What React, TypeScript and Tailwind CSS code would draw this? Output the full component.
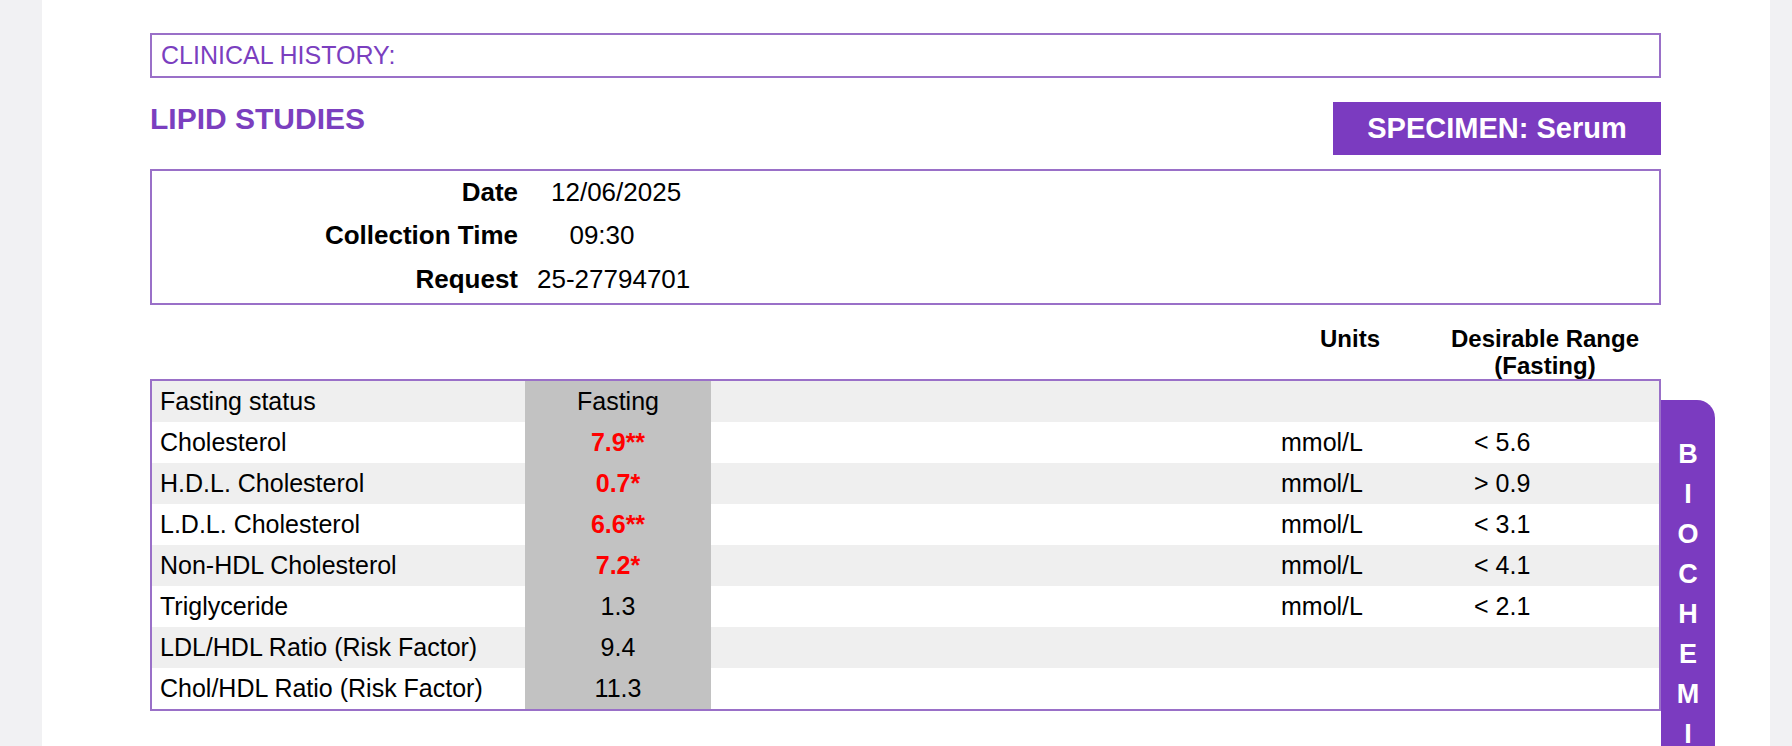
import React from 'react';

const rows = [
  { name: 'Fasting status', value: 'Fasting', flag: false, units: '', range: '' },
  { name: 'Cholesterol', value: '7.9**', flag: true, units: 'mmol/L', range: '< 5.6' },
  { name: 'H.D.L. Cholesterol', value: '0.7*', flag: true, units: 'mmol/L', range: '> 0.9' },
  { name: 'L.D.L. Cholesterol', value: '6.6**', flag: true, units: 'mmol/L', range: '< 3.1' },
  { name: 'Non-HDL Cholesterol', value: '7.2*', flag: true, units: 'mmol/L', range: '< 4.1' },
  { name: 'Triglyceride', value: '1.3', flag: false, units: 'mmol/L', range: '< 2.1' },
  { name: 'LDL/HDL Ratio (Risk Factor)', value: '9.4', flag: false, units: '', range: '' },
  { name: 'Chol/HDL Ratio (Risk Factor)', value: '11.3', flag: false, units: '', range: '' },
];

export default function App() {
  return (
    <div className="w-[1792px] h-[746px] overflow-hidden bg-[#f1f1f3] flex" style={{ fontFamily: '"Liberation Sans", Arial, sans-serif' }}>
      <div className="ml-[42px] w-[1728px] shrink-0 h-full bg-white pl-[108px] pt-[33px]">
        <div className="w-[1511px] h-[45px] border-2 border-[#9a70c8] flex items-center px-[9px] text-[25px] text-[#7b3fbf]">
          CLINICAL HISTORY:
        </div>

        <div className="w-[1511px] flex justify-between mt-[24px]">
          <div className="text-[30px] font-bold text-[#7b3fbf] mt-[-6px]">LIPID STUDIES</div>
          <div className="w-[328px] h-[53px] bg-[#7b3bc0] text-white text-[29px] font-bold flex items-center justify-center">
            SPECIMEN: Serum
          </div>
        </div>

        <div className="w-[1511px] h-[136px] border-2 border-[#9a70c8] mt-[14px] text-[26px] text-black pt-[2px]">
          <div className="flex h-[38px] items-center">
            <div className="w-[366px] shrink-0 text-right font-bold">Date</div>
            <div className="ml-[33px]">12/06/2025</div>
          </div>
          <div className="flex h-[48px] items-center">
            <div className="w-[366px] shrink-0 text-right font-bold">Collection Time</div>
            <div className="w-[168px] text-center">09:30</div>
          </div>
          <div className="flex h-[40px] items-center">
            <div className="w-[366px] shrink-0 text-right font-bold">Request</div>
            <div className="ml-[19px]">25-27794701</div>
          </div>
        </div>

        <div className="w-[1511px] h-[74px] relative text-[24px] font-bold leading-[27px]">
          <div className="absolute left-[1170px] top-[20px]">Units</div>
          <div className="absolute left-[1290px] w-[210px] top-[20px] text-center">Desirable Range<br />(Fasting)</div>
        </div>

        <div className="relative w-[1511px]">
          <div className="border-2 border-[#9a70c8] text-[25px] text-black">
            {rows.map((r, i) => (
              <div key={r.name} className={`flex h-[41px] items-center ${i % 2 === 0 ? 'bg-[#efefef]' : 'bg-white'}`}>
                <div className="w-[373px] shrink-0 pl-[8px] whitespace-nowrap">{r.name}</div>
                <div className={`w-[186px] shrink-0 h-full bg-[#c2c2c2] flex items-center justify-center ${r.flag ? 'text-[#ff0000] font-bold' : ''}`}>
                  {r.value}
                </div>
                <div className="w-[570px] shrink-0" />
                <div className="w-[193px] shrink-0">{r.units}</div>
                <div className="whitespace-nowrap">{r.range}</div>
              </div>
            ))}
          </div>
          <div className="absolute left-[1511px] top-[21px] w-[54px] h-[360px] bg-[#7b3bc0] rounded-tr-[18px] flex flex-col items-center pt-[34px] text-white text-[27px] font-bold leading-[40px]">
            {'BIOCHEMI'.split('').map((c, i) => (
              <span key={i}>{c}</span>
            ))}
          </div>
        </div>
      </div>
    </div>
  );
}
